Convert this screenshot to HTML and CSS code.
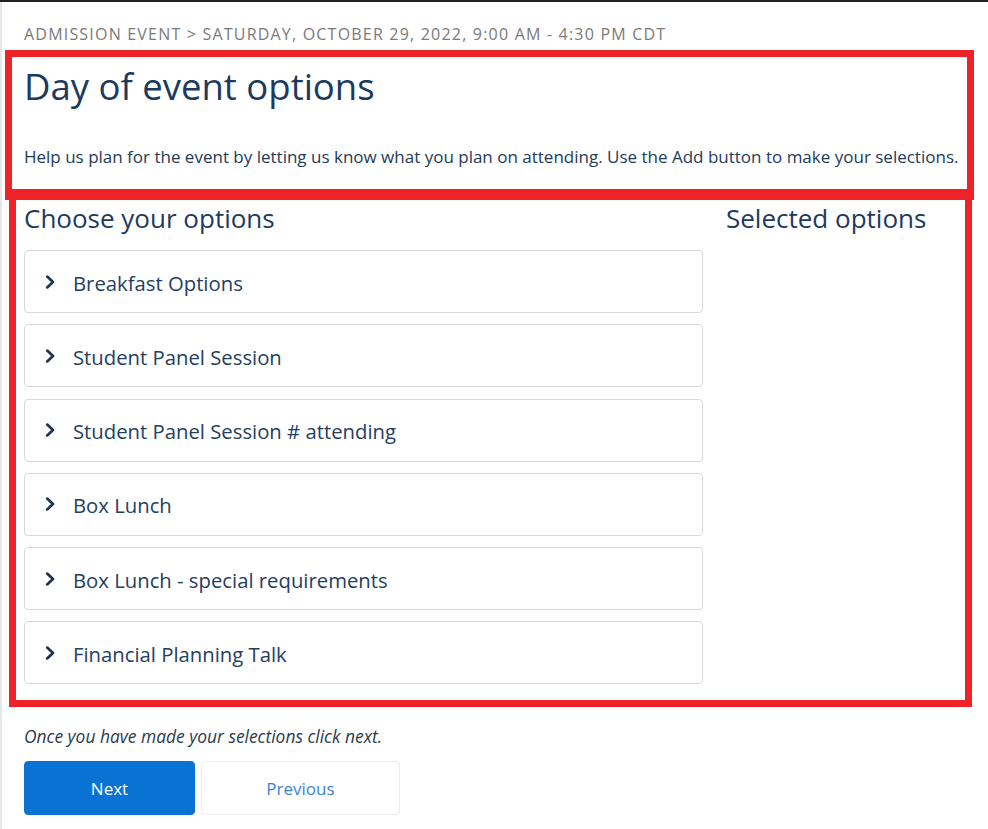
FILE: index.html
```html
<!DOCTYPE html>
<html lang="en">
<head>
<meta charset="utf-8">
<title>Day of event options</title>
<link rel="stylesheet" href="styles.css">
</head>
<body>
<div class="page">
  <p class="crumb">Admission Event &gt; Saturday, October 29, 2022, 9:00 AM - 4:30 PM CDT</p>
  <section class="intro">
    <h1 class="title">Day of event options</h1>
    <p class="help">Help us plan for the event by letting us know what you plan on attending. Use the Add button to make your selections.</p>
  </section>
  <div class="columns">
    <div class="choose">
      <h2 class="subhead">Choose your options</h2>
      <ul class="acc">
        <li class="acc-item"><svg class="chev" viewBox="0 0 10 14" width="10" height="14"><path d="M2.2 1.6 L8 7 L2.2 12.4" /></svg><span>Breakfast Options</span></li>
        <li class="acc-item"><svg class="chev" viewBox="0 0 10 14" width="10" height="14"><path d="M2.2 1.6 L8 7 L2.2 12.4" /></svg><span>Student Panel Session</span></li>
        <li class="acc-item"><svg class="chev" viewBox="0 0 10 14" width="10" height="14"><path d="M2.2 1.6 L8 7 L2.2 12.4" /></svg><span>Student Panel Session # attending</span></li>
        <li class="acc-item"><svg class="chev" viewBox="0 0 10 14" width="10" height="14"><path d="M2.2 1.6 L8 7 L2.2 12.4" /></svg><span>Box Lunch</span></li>
        <li class="acc-item"><svg class="chev" viewBox="0 0 10 14" width="10" height="14"><path d="M2.2 1.6 L8 7 L2.2 12.4" /></svg><span>Box Lunch - special requirements</span></li>
        <li class="acc-item"><svg class="chev" viewBox="0 0 10 14" width="10" height="14"><path d="M2.2 1.6 L8 7 L2.2 12.4" /></svg><span>Financial Planning Talk</span></li>
      </ul>
    </div>
    <div class="selected">
      <h2 class="subhead">Selected options</h2>
    </div>
  </div>
  <p class="note">Once you have made your selections click next.</p>
  <div class="actions">
    <button class="btn btn-primary" type="button">Next</button>
    <button class="btn btn-secondary" type="button">Previous</button>
  </div>
  <div class="mark mark-intro"></div>
  <div class="mark mark-options"></div>
</div>
</body>
</html>
```

FILE: styles.css
```css
* { box-sizing: border-box; }
html, body {
  margin: 0;
  padding: 0;
  background: #fff;
}
body {
  border-top: 2px solid #222;
  font-family: "Open Sans", "Noto Sans", sans-serif;
  color: #1e3a5f;
  height: 829px;
  overflow: hidden;
}
.page {
  position: relative;
  min-height: 827px;
  border-left: 2px solid #e8e8e8;
  padding: 0 0 0 22px;
}
.crumb {
  margin: 0;
  padding-top: 22px;
  height: 48px;
  font-size: 16px;
  line-height: 20px;
  letter-spacing: 1.2px;
  text-transform: uppercase;
  color: #7a7a7a;
  white-space: nowrap;
}
.intro {
  height: 147px;
}
.title {
  margin: 0;
  padding-top: 11px;
  font-size: 36.5px;
  font-weight: 400;
  line-height: 50px;
  color: #1b3a5e;
}
.help {
  margin: 36px 0 0;
  font-size: 17px;
  line-height: 20px;
  color: #233b58;
  white-space: nowrap;
}
.columns {
  display: grid;
  grid-template-columns: 679px 1fr;
  column-gap: 23px;
}
.subhead {
  margin: 0;
  padding-top: 3px;
  font-size: 26px;
  font-weight: 400;
  line-height: 36px;
  color: #1e3a5f;
}
.acc {
  list-style: none;
  margin: 14px 0 0;
  padding: 0;
  display: flex;
  flex-direction: column;
  gap: 11.25px;
}
.acc-item {
  height: 63px;
  border: 1px solid #d9d9d9;
  border-radius: 4px;
  display: flex;
  align-items: center;
  padding-left: 20px;
  gap: 18px;
  font-size: 20.3px;
  color: #24405f;
}
.acc-item span {
  padding-top: 2px;
}
.chev {
  flex: none;
  fill: none;
  stroke: #1c3553;
  stroke-width: 2.7;
  stroke-linecap: round;
  stroke-linejoin: round;
}
.note {
  margin: 41px 0 0;
  font-size: 17.4px;
  line-height: 22px;
  font-style: italic;
  color: #2b3b4d;
  white-space: nowrap;
}
.actions {
  display: flex;
  gap: 6px;
  margin-top: 14px;
}
.btn {
  height: 54px;
  border-radius: 4px;
  font-family: inherit;
  font-size: 17px;
  cursor: pointer;
}
.btn-primary {
  width: 171px;
  border: 1px solid #0a72d2;
  background: #0a72d2;
  color: #fff;
}
.btn-secondary {
  width: 199px;
  border: 1px solid #ececec;
  background: #fff;
  color: #3b82d4;
}
.mark {
  position: absolute;
  border: 7px solid #ee2229;
  pointer-events: none;
}
.mark-intro {
  left: 3px;
  top: 48px;
  width: 969px;
  height: 150px;
}
.mark-options {
  left: 7px;
  top: 187px;
  width: 963px;
  height: 518px;
}
```
